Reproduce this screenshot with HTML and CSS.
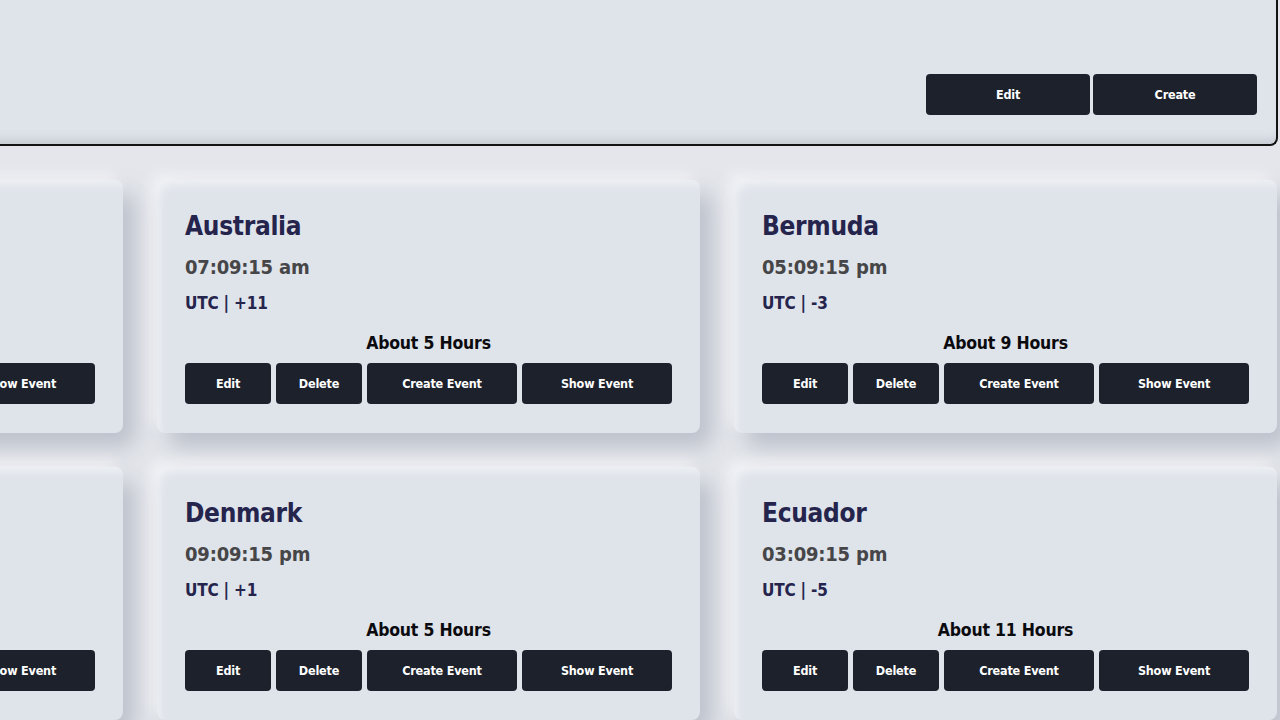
FILE: index.html
```html
<!DOCTYPE html>
<html lang="en">
<head>
<meta charset="utf-8">
<title>World Clock</title>
<link rel="stylesheet" href="styles.css">
</head>
<body>
<div class="wrap">
  <div class="panel">
    <div class="panel-actions">
      <button class="btn btn-wide">Edit</button>
      <button class="btn btn-wide">Create</button>
    </div>
  </div>
  <div class="grid">
    <div class="card">
      <h2 class="country">Argentina</h2>
      <div class="time">09:09:15 pm</div>
      <div class="utc">UTC | -3</div>
      <div class="actions">
        <div class="diff">About 9 Hours</div>
        <div class="btns">
          <button class="btn btn-sm">Edit</button>
          <button class="btn btn-sm">Delete</button>
          <button class="btn btn-lg">Create Event</button>
          <button class="btn btn-lg">Show Event</button>
        </div>
      </div>
    </div>
    <div class="card">
      <h2 class="country">Australia</h2>
      <div class="time">07:09:15 am</div>
      <div class="utc">UTC | +11</div>
      <div class="actions">
        <div class="diff">About 5 Hours</div>
        <div class="btns">
          <button class="btn btn-sm">Edit</button>
          <button class="btn btn-sm">Delete</button>
          <button class="btn btn-lg">Create Event</button>
          <button class="btn btn-lg">Show Event</button>
        </div>
      </div>
    </div>
    <div class="card">
      <h2 class="country">Bermuda</h2>
      <div class="time">05:09:15 pm</div>
      <div class="utc">UTC | -3</div>
      <div class="actions">
        <div class="diff">About 9 Hours</div>
        <div class="btns">
          <button class="btn btn-sm">Edit</button>
          <button class="btn btn-sm">Delete</button>
          <button class="btn btn-lg">Create Event</button>
          <button class="btn btn-lg">Show Event</button>
        </div>
      </div>
    </div>
    <div class="card">
      <h2 class="country">Canada</h2>
      <div class="time">03:09:15 pm</div>
      <div class="utc">UTC | -5</div>
      <div class="actions">
        <div class="diff">About 11 Hours</div>
        <div class="btns">
          <button class="btn btn-sm">Edit</button>
          <button class="btn btn-sm">Delete</button>
          <button class="btn btn-lg">Create Event</button>
          <button class="btn btn-lg">Show Event</button>
        </div>
      </div>
    </div>
    <div class="card">
      <h2 class="country">Denmark</h2>
      <div class="time">09:09:15 pm</div>
      <div class="utc">UTC | +1</div>
      <div class="actions">
        <div class="diff">About 5 Hours</div>
        <div class="btns">
          <button class="btn btn-sm">Edit</button>
          <button class="btn btn-sm">Delete</button>
          <button class="btn btn-lg">Create Event</button>
          <button class="btn btn-lg">Show Event</button>
        </div>
      </div>
    </div>
    <div class="card">
      <h2 class="country">Ecuador</h2>
      <div class="time">03:09:15 pm</div>
      <div class="utc">UTC | -5</div>
      <div class="actions">
        <div class="diff">About 11 Hours</div>
        <div class="btns">
          <button class="btn btn-sm">Edit</button>
          <button class="btn btn-sm">Delete</button>
          <button class="btn btn-lg">Create Event</button>
          <button class="btn btn-lg">Show Event</button>
        </div>
      </div>
    </div>
  </div>
</div>
</body>
</html>
```
FILE: styles.css
```css
* { box-sizing: border-box; }

html, body {
  margin: 0;
  padding: 0;
  height: 720px;
  overflow: hidden;
}

body {
  background: #e4e6eb;
  font-family: "DejaVu Sans Condensed", "DejaVu Sans", sans-serif;
  font-weight: bold;
}

.wrap {
  width: 1698px;
  margin-left: -420px;
  margin-top: -42px;
}

.panel {
  height: 188px;
  background: #dfe3ea;
  border-right: 2px solid #141414;
  border-bottom: 2px solid #141414;
  border-radius: 0 0 8px 0;
  display: flex;
  justify-content: flex-end;
  align-items: flex-end;
  padding: 0 19px 29px 0;
  box-shadow: inset 0 -12px 10px -8px rgba(120, 128, 140, 0.25);
}

.panel-actions {
  display: flex;
  gap: 3px;
}

.btn {
  background: #1c212b;
  color: #ffffff;
  border: none;
  border-radius: 4px;
  height: 41px;
  font-family: inherit;
  font-weight: bold;
  font-size: 12.5px;
  letter-spacing: -0.2px;
  padding: 0;
  cursor: pointer;
}

.btn-wide { width: 164px; }
.btn-sm { width: 86px; }
.btn-lg { width: 150px; }

.grid {
  margin-top: 34px;
  display: grid;
  grid-template-columns: repeat(3, 543px);
  column-gap: 34px;
  row-gap: 34px;
}

.card {
  height: 253px;
  background: #dfe3ea;
  border-radius: 8px;
  padding: 29px 28px 0 28px;
  box-shadow:
    inset 8px 10px 12px -6px rgba(255, 255, 255, 0.55),
    12px 14px 22px rgba(145, 155, 172, 0.5),
    -6px -6px 14px rgba(255, 255, 255, 0.55);
}

.country {
  margin: 0;
  font-size: 26px;
  line-height: 34px;
  letter-spacing: -0.3px;
  color: #25244d;
}

.time {
  margin-top: 10px;
  font-size: 20px;
  line-height: 28px;
  letter-spacing: -0.2px;
  color: #464648;
}

.utc {
  margin-top: 11px;
  font-size: 17px;
  line-height: 22px;
  letter-spacing: -0.2px;
  color: #25244d;
}

.actions {
  margin-top: 17px;
  width: 487px;
}

.diff {
  text-align: center;
  font-size: 17.5px;
  line-height: 24px;
  letter-spacing: -0.2px;
  color: #0b0b0f;
  margin-bottom: 8px;
}

.btns {
  display: flex;
  gap: 5px;
}
```
